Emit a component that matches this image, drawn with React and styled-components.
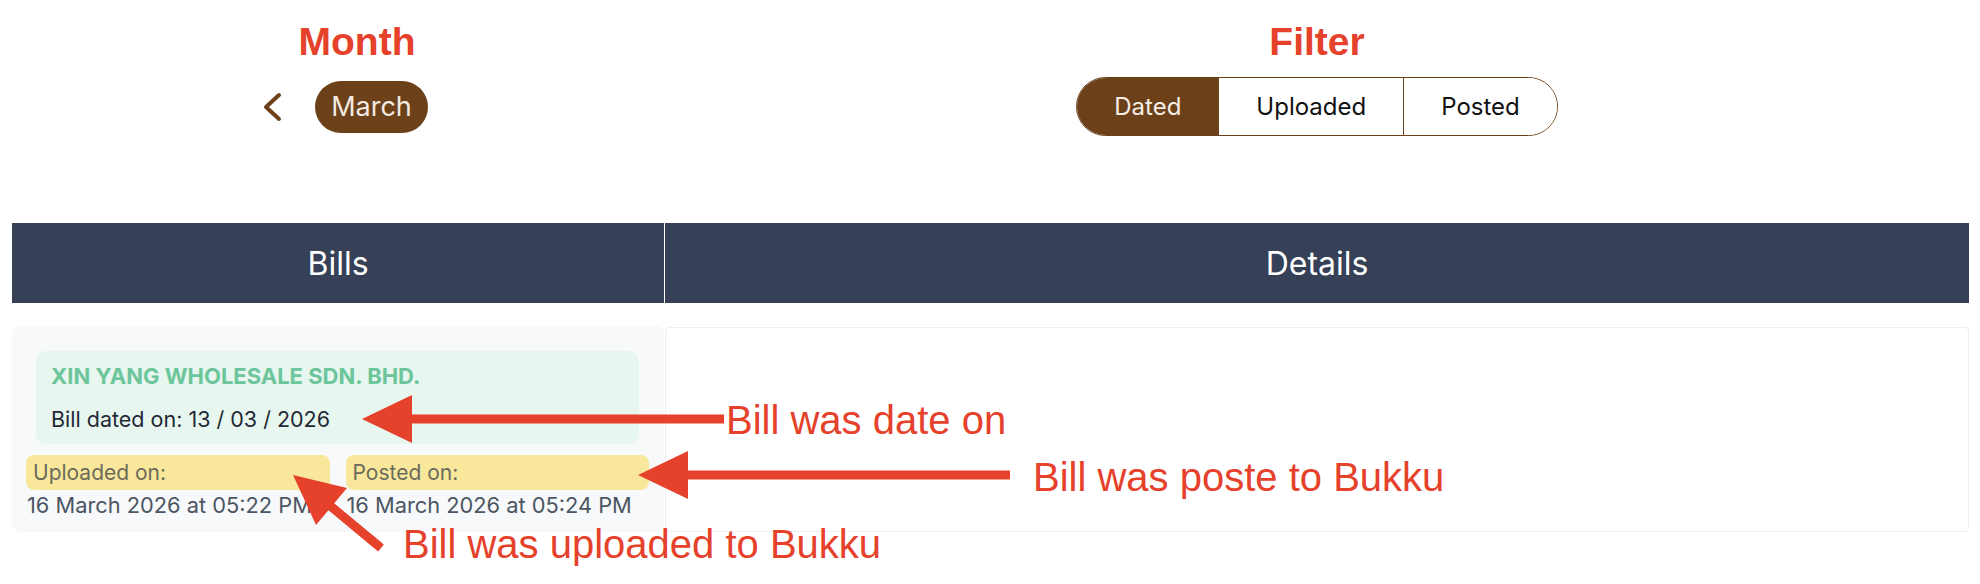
import React, { useState } from "react";
import styled, { createGlobalStyle } from "styled-components";

const filters = ["Dated", "Uploaded", "Posted"];

const bills = [
  {
    id: "b1",
    supplier: "XIN YANG WHOLESALE SDN. BHD.",
    dated: "13 / 03 / 2026",
    uploaded: "16 March 2026 at 05:22 PM",
    posted: "16 March 2026 at 05:24 PM",
  },
];

function App() {
  const [filter, setFilter] = useState("Dated");

  return (
    <Page>
      <GlobalStyle />
      <TopBar>
        <Section $shift={38}>
          <Label>Month</Label>
          <MonthRow>
            <ChevronButton aria-label="Previous month">
              <svg width="20" height="30" viewBox="0 0 20 30">
                <polyline
                  points="17,3 4,15 17,27"
                  fill="none"
                  stroke="#6c4119"
                  strokeWidth="4"
                  strokeLinecap="round"
                  strokeLinejoin="round"
                />
              </svg>
            </ChevronButton>
            <MonthPill>March</MonthPill>
          </MonthRow>
        </Section>
        <Section>
          <Label>Filter</Label>
          <Segmented>
            {filters.map((f) => (
              <Segment key={f} $active={f === filter} onClick={() => setFilter(f)}>
                {f}
              </Segment>
            ))}
          </Segmented>
        </Section>
      </TopBar>

      <TableHead>
        <HeadCell>Bills</HeadCell>
        <HeadCell>Details</HeadCell>
      </TableHead>

      <TableBody>
        <BillList>
          {bills.map((bill) => (
            <div key={bill.id}>
              <BillCard>
                <Supplier>{bill.supplier}</Supplier>
                <DatedLine>Bill dated on: {bill.dated}</DatedLine>
              </BillCard>
              <MetaGrid>
                <div>
                  <Tag>Uploaded on:</Tag>
                  <MetaDate>{bill.uploaded}</MetaDate>
                </div>
                <div>
                  <Tag>Posted on:</Tag>
                  <MetaDate>{bill.posted}</MetaDate>
                </div>
              </MetaGrid>
            </div>
          ))}
        </BillList>
        <DetailsPanel />
      </TableBody>

      {/* red annotations drawn over the screenshot */}
      <Arrows width="1980" height="584" viewBox="0 0 1980 584">
        <g fill="#e5412b" stroke="#e5412b">
          <line x1="724" y1="419" x2="405" y2="419" strokeWidth="9" />
          <polygon points="362,419 412,395 412,443" stroke="none" />
          <line x1="1010" y1="475" x2="684" y2="475" strokeWidth="9" />
          <polygon points="638,475 688,451 688,499" stroke="none" />
          <line x1="381" y1="548" x2="328" y2="504" strokeWidth="9" />
          <polygon points="293,475 347,488 316,525" stroke="none" />
        </g>
      </Arrows>
      <Note $x={726} $y={400}>Bill was date on</Note>
      <Note $x={1033} $y={457}>Bill was poste to Bukku</Note>
      <Note $x={403} $y={524}>Bill was uploaded to Bukku</Note>
    </Page>
  );
}

export default App;

const GlobalStyle = createGlobalStyle`
  html, body {
    margin: 0;
    background: #ffffff;
  }
  body {
    font-family: Inter, "Noto Sans", sans-serif;
  }
`;

const Page = styled.div`
  position: relative;
  width: 1980px;
  height: 584px;
  box-sizing: border-box;
  padding: 22px 11px 0 12px;
  overflow: hidden;
`;

const TopBar = styled.div`
  display: grid;
  grid-template-columns: 1fr 2fr;
  column-gap: 1px;
`;

const Section = styled.div`
  display: flex;
  flex-direction: column;
  align-items: center;
  gap: 16px;
  padding-left: ${(p) => p.$shift || 0}px;
`;

const Label = styled.h2`
  margin: 0;
  font: bold 39px/1 "Liberation Sans", Arial, sans-serif;
  color: #e5412b;
`;

const MonthRow = styled.div`
  display: flex;
  align-items: center;
  height: 59px;
  gap: 33px;
  padding-right: 24px;
`;

const ChevronButton = styled.button`
  display: flex;
  padding: 0;
  border: none;
  background: none;
  cursor: pointer;
`;

const MonthPill = styled.div`
  height: 52px;
  padding: 0 16px;
  border-radius: 26px;
  background: #6c4119;
  color: #f3ebe3;
  font-size: 27px;
  line-height: 52px;
`;

const Segmented = styled.div`
  display: flex;
  height: 59px;
  box-sizing: border-box;
  border: 1px solid #6c4119;
  border-radius: 30px;
  overflow: hidden;
`;

const Segment = styled.button`
  padding: 0 37px;
  border: none;
  border-left: 1px solid #6c4119;
  background: ${(p) => (p.$active ? "#6c4119" : "#ffffff")};
  color: ${(p) => (p.$active ? "#f5eee6" : "#111111")};
  font-family: Inter, "Noto Sans", sans-serif;
  font-size: 24px;
  cursor: pointer;
  &:first-child {
    border-left: none;
  }
`;

const TableHead = styled.div`
  display: grid;
  grid-template-columns: 1fr 2fr;
  column-gap: 1px;
  margin-top: 87px;
`;

const HeadCell = styled.div`
  display: flex;
  align-items: center;
  justify-content: center;
  height: 80px;
  background: #364157;
  color: #ffffff;
  font-size: 32px;
`;

const TableBody = styled.div`
  display: grid;
  grid-template-columns: 1fr 2fr;
  column-gap: 1px;
  margin-top: 23px;
`;

const BillList = styled.div`
  padding: 25px 15px 12px 14px;
  border-radius: 8px;
  background: #f7f9fa;
`;

const BillCard = styled.div`
  margin: 0 10px;
  padding: 10px 16px 10px 15px;
  border-radius: 10px;
  background: #e7f6ee;
`;

const Supplier = styled.div`
  font-size: 22px;
  font-weight: 700;
  line-height: 30px;
  color: #6cc59b;
`;

const DatedLine = styled.div`
  margin-top: 13px;
  font-size: 21.5px;
  line-height: 30px;
  color: #1f2937;
`;

const MetaGrid = styled.div`
  display: grid;
  grid-template-columns: 1fr 1fr;
  column-gap: 16px;
  margin-top: 11px;
`;

const Tag = styled.div`
  height: 35px;
  padding: 0 7px;
  border-radius: 8px;
  background: #f9e89c;
  color: #6b6b5b;
  font-size: 21px;
  line-height: 35px;
`;

const MetaDate = styled.div`
  margin-left: 1px;
  font-size: 21.8px;
  line-height: 30px;
  color: #4b5563;
  white-space: nowrap;
`;

const DetailsPanel = styled.div`
  margin-top: 1px;
  border: 1px solid #eceff2;
  border-radius: 4px;
  background: #ffffff;
`;

const Arrows = styled.svg`
  position: absolute;
  top: 0;
  left: 0;
  pointer-events: none;
`;

const Note = styled.div`
  position: absolute;
  left: ${(p) => p.$x}px;
  top: ${(p) => p.$y}px;
  font: 40px/1 "Liberation Sans", Arial, sans-serif;
  color: #e5412b;
  white-space: nowrap;
  pointer-events: none;
`;
